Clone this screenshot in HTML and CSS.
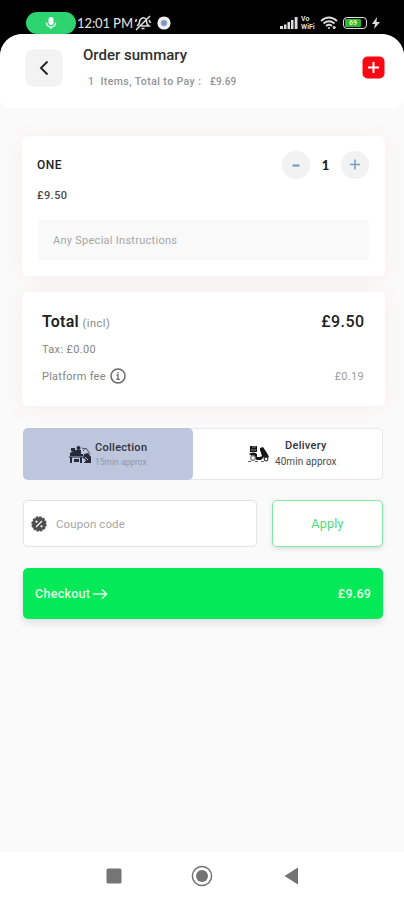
FILE: index.html
```
<!DOCTYPE html>
<html lang="en">
<head>
<meta charset="utf-8">
<meta name="viewport" content="width=device-width, initial-scale=1">
<title>Order summary</title>
<link rel="stylesheet" href="styles.css">
</head>
<body>
<div class="phone">
  <div class="status">
    <div class="status-left">
      <span class="mic"><svg width="12" height="14" viewBox="0 0 12 14"><rect x="3.5" y="1" width="5" height="8" rx="2.5" fill="#fff"/><path d="M1.5 6.500a4.500 4.500 0 0 0 9 0M6 11v2" stroke="#d6ffe4" stroke-width="1.600" fill="none"/></svg></span>
      <span class="clock">12:01 PM</span>
      <svg class="mute" width="18" height="16" viewBox="0 0 18 16" fill="none" stroke="#ddd" stroke-width="1.600"><path d="M3 11l2-2 1-4q3-4 6-1l1 5 2 2H7M7.500 13.500h3M2 15L16 1M1.500 7l1-3M15 5l1.500 3"/></svg>
      <svg class="chrome" width="14" height="14" viewBox="0 0 14 14"><circle cx="7" cy="7" r="6.600" fill="#f2f2f2"/><circle cx="7" cy="7" r="3" fill="#7595c4" stroke="#a9b3c2" stroke-width="1"/></svg>
    </div>
    <div class="status-right">
      <svg width="18" height="12" viewBox="0 0 18 12" fill="#ddd"><path d="M0 9h3v3H0zM4 7.500h2.500V12H4zM7.500 5H10v7H7.500zM11 3h2.500v9H11zM14.700 0h2.800v12h-2.800z"/></svg>
      <span class="vowifi"><span>Vo</span><span>WiFi</span></span>
      <svg class="wifi" width="18" height="14" viewBox="0 0 18 14" fill="none" stroke="#ddd" stroke-width="1.700"><path d="M1 5Q9-2 17 5M3.500 7.500q5.500-4.500 11 0M6 10q3-2.500 6 0"/><circle cx="9" cy="12" r="1" fill="#ddd" stroke="none"/><path d="M14 10v3M12.800 11.500h3" stroke-width="1.500"/></svg>
      <span class="battery"><span class="charge">69</span></span>
      <svg class="bolt" width="8" height="12" viewBox="0 0 8 12" fill="#ddd"><path d="M5 0L0 7h3L2 12l6-7H4.500z"/></svg>
    </div>
  </div>
  <main class="sheet">
    <header class="header">
      <button class="back" aria-label="Back"><svg width="12" height="16" viewBox="0 0 12 16" fill="none" stroke="#222" stroke-width="1.900"><path d="M9.500 1.500L3 8l6.500 6.500"/></svg></button>
      <div class="heading">
        <h1>Order summary</h1>
        <p><span class="items">1&nbsp; Items, Total to Pay :</span><span class="pay">£9.69</span></p>
      </div>
      <button class="add" aria-label="Add"><svg width="23" height="23" viewBox="0 0 23 23"><rect x=".5" y=".5" width="22" height="22" rx="5" fill="#fb0713"/><path d="M6 11.500h11M11.500 6v11" stroke="#fff" stroke-width="2"/></svg></button>
    </header>
    <section class="card item">
      <div class="row"><span class="name">ONE</span>
        <div class="stepper"><button class="round"><svg width="10" height="10"><path d="M1.500 5.500h7" stroke="#6796bd" stroke-width="2.200"/></svg></button><b>1</b><button class="round"><svg width="12" height="12"><path d="M1 5.500h10M6 .5v10" stroke="#79a0c0" stroke-width="1.600"/></svg></button></div>
      </div>
      <div class="price">£9.50</div>
      <div class="notes">Any Special Instructions</div>
    </section>
    <section class="card totals">
      <div class="row total"><span><strong>Total</strong> <small>(incl)</small></span><strong class="amount">£9.50</strong></div>
      <div class="row tax">Tax: £0.00</div>
      <div class="row fee"><span class="fee-label">Platform fee <svg width="16" height="16" viewBox="0 0 16 16" fill="none" stroke="#686868"><circle cx="8" cy="8" r="7" stroke-width="1.500"/><path d="M6.500 7H8v4M6.300 11.300h3.600M8 4v1.500" stroke-width="1.300"/></svg></span><span class="fee-amount">£0.19</span></div>
    </section>
    <div class="modes">
      <div class="mode selected">
        <svg class="collect" width="22" height="19" viewBox="0 0 22 19" fill="#252b3b"><rect x="2" y="3" width="4" height="3"/><circle cx="9.500" cy="3" r="2"/><path d="M7 5h5v4h2v2H1V8l3-2z"/><path d="M0 11h14v2H0z" fill="#65708b"/><path d="M1 12h2v6H1zM5 14h5v3H5zM11 12h2v6h-2z"/><path d="M13 3l3 1M14 6l3-3 4 6" fill="none" stroke="#485168"/><path d="M15 9l4-1 3 4v6h-7l2-3-3-2z"/><path d="M16 12l3 3" stroke="#aeb8d0" stroke-width="1"/></svg>
        <div class="mode-text"><span class="mode-name">Collection</span><span class="mode-time">15min approx</span></div>
      </div>
      <div class="mode delivery">
        <svg class="scooter" width="22" height="19" viewBox="0 0 22 19" fill="#161616"><path d="M2 1h7v6H2z"/><path d="M4 2h4M3 5h5" stroke="#888" stroke-width="1"/><path d="M1 9q4-3 8 0v3h3l2-1-2-6V3l3-1 4 6 2 4-3 2-2-2-3 3H9z"/><circle cx="5" cy="13" r="2.300" fill="#fff" stroke="#777" stroke-width="1.200"/><circle cx="18" cy="14" r="1.800" fill="#fff" stroke="#333" stroke-width="1.200"/><path d="M0 16.500h3M7 16.500h3M13 16.500h3" stroke="#666"/></svg>
        <div class="mode-text"><span class="mode-name">Delivery</span><span class="mode-time">40min approx</span></div>
      </div>
    </div>
    <div class="coupon-row">
      <div class="coupon"><svg width="16" height="16" viewBox="0 0 16 16"><circle cx="8" cy="8" r="6.800" fill="#4d4d4d" stroke="#4d4d4d" stroke-width="1.800" stroke-dasharray="2.400 1.160"/><path d="M5 11l6-6" stroke="#fff" stroke-width="1.300"/><circle cx="5.500" cy="5.700" r="1.100" fill="#fff"/><circle cx="10.500" cy="10.300" r="1.100" fill="#fff"/></svg><span>Coupon code</span></div>
      <button class="apply">Apply</button>
    </div>
    <div class="checkout"><span class="go">Checkout <svg width="15" height="12" viewBox="0 0 15 12" fill="none" stroke="#e4ffe9" stroke-width="1.500"><path d="M0 6h14M9 1.500L13.500 6 9 10.500"/></svg></span><span class="due">£9.69</span></div>
  </main>
  <nav class="nav">
    <svg width="16" height="16"><rect x=".5" y=".5" width="15" height="15" rx="1.500" fill="#757575"/></svg>
    <svg width="22" height="22" viewBox="0 0 22 22"><circle cx="11" cy="11" r="9.600" fill="none" stroke="#737373" stroke-width="1.500"/><circle cx="11" cy="11" r="6" fill="#737373"/></svg>
    <svg width="15" height="18"><path d="M.5 9L14 .5v17z" fill="#737373"/></svg>
  </nav>
</div>
</body>
</html>
```
FILE: styles.css
```
* { box-sizing: border-box; }
body { margin: 0; background: #fff; font-family: Roboto, "Liberation Sans", sans-serif; }
button { padding: 0; border: 0; font: inherit; }
svg { display: block; flex: none; }
h1, p { margin: 0; }
.phone { width: 404px; height: 900px; display: flex; flex-direction: column; background: linear-gradient(#000 70px, #fff 70px); overflow: hidden; }
.status { height: 34px; flex: none; display: flex; justify-content: space-between; padding: 12px 24px 0 26px; color: #ddd; }
.status-left, .status-right { display: flex; align-items: center; height: 22px; }
.mic { width: 50px; height: 22px; border-radius: 11px; background: #2dd36f; display: flex; align-items: center; justify-content: center; }
.clock { width: 57px; margin-left: 1px; font: 500 13px Lato, sans-serif; letter-spacing: -.1px; white-space: nowrap; }
.mute { margin-left: 0; }
.chrome { margin-left: 5px; }
.vowifi { width: 16px; margin-left: 3px; display: flex; flex-direction: column; font-size: 7px; line-height: 8px; font-weight: 700; }
.wifi { margin-left: 3px; }
.battery { width: 24px; height: 12px; margin-left: 5px; padding: 1px; border: 1.5px solid #ddd; border-radius: 4px; display: flex; }
.charge { width: 16px; background: #31b532; color: #d6ffd4; font-size: 7px; line-height: 8px; text-align: center; border-radius: 1px; font-weight: 700; }
.bolt { margin-left: 5px; }
.sheet { height: 818px; flex: none; background: #fafafa; border-radius: 22px 22px 0 0; overflow: hidden; padding-bottom: 20px; }
.header { height: 74px; display: flex; background: #fff; border-radius: 22px 22px 10px 10px; padding: 0 19px 0 26px; }
.back { width: 36px; height: 36px; margin-top: 16px; border: 1px solid #ededed; border-radius: 6px; background: #f3f3f3; display: flex; align-items: center; justify-content: center; }
.heading { flex: 1; padding: 11px 0 0 21px; }
h1 { font-size: 15px; line-height: 20px; font-weight: 500; color: #303030; letter-spacing: 0; }
.heading p { display: flex; padding: 9px 0 0 5px; font-size: 10.5px; line-height: 16px; color: #929297; font-weight: 500; }
.items { width: 122px; white-space: nowrap; letter-spacing: .42px; }
.pay { font-size: 10px; letter-spacing: .1px; }
.add { width: 23px; height: 23px; margin-top: 22px; background: none; }
.card { width: 363px; margin-left: 22px; background: #fff; border-radius: 6px; box-shadow: 0 2px 20px rgba(225, 80, 60, .065); }
.row { display: flex; justify-content: space-between; align-items: center; }
.item { height: 140px; margin-top: 28px; padding: 15px 16px 0 15px; }
.item .row { height: 28px; }
.name { font-size: 12px; font-weight: 500; color: #222; letter-spacing: .5px; }
.stepper { width: 87px; display: flex; align-items: center; justify-content: space-between; font: 700 13px Lato, sans-serif; color: #222; }
.round { width: 28px; height: 28px; border-radius: 50%; background: #f2f2f3; display: flex; justify-content: center; align-items: center; }
.price { margin-top: 8px; font-size: 11px; line-height: 18px; font-weight: 500; color: #4a4a4a; letter-spacing: .45px; }
.notes { height: 40px; margin: 15px 0 0 1px; padding-left: 15px; background: #f9f9f9; color: #a6a6a6; font-size: 11px; line-height: 41px; letter-spacing: .27px; }
.totals { height: 114px; margin-top: 16px; padding: 17px 21px 0 20px; color: #858585; font-size: 11px; }
.total { height: 25px; }
.total strong { font-size: 16px; font-weight: 600; color: #222; letter-spacing: .2px; }
.total .amount { font-weight: 500; letter-spacing: .4px; margin-right: -.4px; }
.total small { font-size: 11px; letter-spacing: .5px; margin-left: 1px; }
.tax { height: 31px; letter-spacing: .34px; }
.fee { height: 22px; }
.fee-label { display: flex; align-items: center; gap: 4px; letter-spacing: .25px; }
.fee-amount { color: #9d9d9d; letter-spacing: .3px; }
.modes { width: 360px; height: 52px; margin: 22px 0 0 23px; display: flex; border: 1px solid #e6e6e8; border-radius: 5px; background: #fff; }
.mode { display: flex; align-items: center; }
.selected { width: 170px; margin: -1px 0 -1px -1px; padding-left: 46px; background: #bec6dd; border-radius: 5px; }
.delivery { padding-left: 55px; }
.mode-text { display: flex; flex-direction: column; font-size: 11px; line-height: 14px; }
.selected .mode-text { margin: 2px 0 0 4px; }
.mode-name { font-weight: 500; color: #30333b; letter-spacing: .28px; }
.selected .mode-time { font-size: 8.5px; color: #8f97ae; }
.delivery .mode-text { align-items: center; line-height: 16px; margin: 0 0 0 5px; }
.delivery .mode-time { font-size: 10px; color: #4d4d4d; letter-spacing: .05px; }
.coupon-row { display: flex; gap: 15px; margin: 20px 0 0 23px; }
.coupon { width: 234px; height: 47px; border: 1px solid #e2e2e2; border-radius: 4px; background: #fff; padding-left: 7px; display: flex; align-items: center; gap: 9px; color: #a6a6a6; font-size: 11.5px; letter-spacing: .1px; }
.apply { width: 111px; height: 47px; border: 1px solid #80eaa0; border-radius: 5px; background: #fff; color: #4bdd79; font-size: 12.5px; letter-spacing: .3px; box-shadow: 0 2px 4px rgba(0, 0, 0, .12); }
.checkout { width: 360px; height: 51px; margin: 21px 0 0 23px; padding: 0 12px; background: #03e957; color: #e4ffe9; border-radius: 5px; display: flex; align-items: center; justify-content: space-between; box-shadow: 0 4px 6px rgba(40, 40, 80, .12); font-size: 12.5px; font-weight: 500; }
.go { display: flex; align-items: center; gap: 3px; letter-spacing: .28px; }
.due { letter-spacing: .2px; }
.nav { height: 48px; display: flex; background: #fff; align-items: center; padding-left: 106px; }
.nav svg:nth-child(2) { margin-left: 69px; }
.nav svg:nth-child(3) { margin-left: 71px; }
```
